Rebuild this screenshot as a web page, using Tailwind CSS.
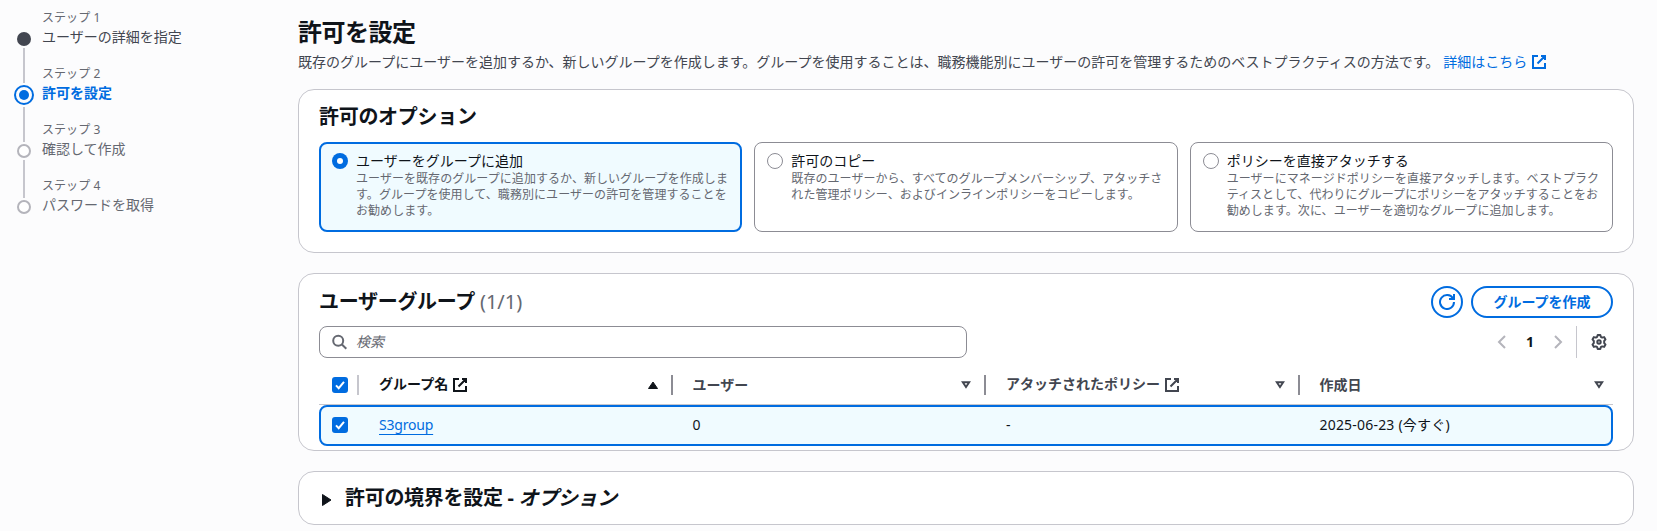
<!DOCTYPE html>
<html lang="ja">
<head>
<meta charset="utf-8">
<title>許可を設定</title>
<script src="https://cdn.jsdelivr.net/npm/@tailwindcss/browser@4"></script>
</head>
<body class="h-[531px] overflow-hidden bg-[#fcfcfd] font-['Noto_Sans','Noto_Sans_CJK_JP',sans-serif] text-sm leading-5 text-[#0f141a]">
<svg class="hidden">
  <symbol id="external" viewBox="0 0 16 16"><path d="M10 2h4v4M6.500 9.500L14 2M14 9.05V14H2V2h5" fill="none" stroke="currentColor" stroke-width="2"/></symbol>
  <symbol id="check" viewBox="0 0 16 16"><rect width="16" height="16" rx="3" fill="#006ce0"/><path d="M4 8.4l2.7 2.8L12 4.8" fill="none" stroke="#fff" stroke-width="2"/></symbol>
  <symbol id="sort" viewBox="0 0 16 16"><path d="M4.800 5.200h6.400L8 10z" fill="none" stroke="currentColor" stroke-width="1.900"/></symbol>
</svg>
<div class="flex h-full">
  <nav class="flex w-[298px] shrink-0 gap-2 pl-[14px] pt-[10px]">
    <svg class="h-[210px] w-5 shrink-0" viewBox="0 0 20 210" fill="none">
      <path d="M10 38v35M10 97v35M10 150v38" stroke="#c6c6cd" stroke-width="2"/>
      <circle cx="10" cy="29" r="7" fill="#424650"/>
      <circle cx="10" cy="85" r="9" stroke="#006ce0" stroke-width="2"/>
      <circle cx="10" cy="85" r="5" fill="#006ce0"/>
      <circle cx="10" cy="141" r="6" fill="#fff" stroke="#b4b4bb" stroke-width="2"/>
      <circle cx="10" cy="197" r="6" fill="#fff" stroke="#b4b4bb" stroke-width="2"/>
    </svg>
    <ol class="text-[#656871]">
      <li class="h-14"><div class="text-xs leading-4 tracking-[0.005em]">ステップ 1</div><div class="pt-px text-[#424650]">ユーザーの詳細を指定</div></li>
      <li class="h-14"><div class="text-xs leading-4 tracking-[0.005em]">ステップ 2</div><div class="pt-px font-bold text-[#006ce0]">許可を設定</div></li>
      <li class="h-14"><div class="text-xs leading-4 tracking-[0.005em]">ステップ 3</div><div class="pt-px">確認して作成</div></li>
      <li class="h-14"><div class="text-xs leading-4 tracking-[0.005em]">ステップ 4</div><div class="pt-px">パスワードを取得</div></li>
    </ol>
  </nav>
  <main class="flex w-[1336px] shrink-0 flex-col gap-5 pt-[18px]">
    <header class="-mt-px -mb-1 h-14">
      <h1 class="text-2xl leading-[30px] font-bold tracking-[-0.02em]">許可を設定</h1>
      <p class="flex items-center pt-[5px] whitespace-nowrap text-[#424650]">既存のグループにユーザーを追加するか、新しいグループを作成します。グループを使用することは、職務機能別にユーザーの許可を管理するためのベストプラクティスの方法です。<a class="ml-1 flex items-center gap-1 text-[#006ce0]">詳細はこちら<svg class="size-4"><use href="#external"/></svg></a></p>
    </header>

    <section class="h-[164px] shrink-0 rounded-2xl border border-[#c6c6cd] bg-white px-5 pt-[15px]">
      <h2 class="text-xl leading-6 font-bold tracking-[-0.015em]">許可のオプション</h2>
      <div class="mt-[13px] grid h-[90px] grid-cols-3 gap-3">
        <label class="flex gap-2 rounded-lg border-2 border-[#006ce0] bg-[#f0fbff] px-[11px] pt-[7px]">
          <svg class="mt-0.5 size-4 shrink-0" viewBox="0 0 16 16"><circle cx="8" cy="8" r="8" fill="#006ce0"/><circle cx="8" cy="8" r="3" fill="#fff"/></svg>
          <div class="min-w-0"><div>ユーザーをグループに追加</div><p class="-mr-1 text-xs leading-4 tracking-[0.005em] whitespace-nowrap text-[#656871]">ユーザーを既存のグループに追加するか、新しいグループを作成しま<br>す。グループを使用して、職務別にユーザーの許可を管理することを<br>お勧めします。</p></div>
        </label>
        <label class="flex gap-2 rounded-lg border border-[#8c8c94] px-3 pt-2">
          <svg class="mt-0.5 size-4 shrink-0" viewBox="0 0 16 16"><circle cx="8" cy="8" r="7.5" fill="#fff" stroke="#8c8c94"/></svg>
          <div class="min-w-0"><div>許可のコピー</div><p class="-mr-1 text-xs leading-4 tracking-[0.005em] whitespace-nowrap text-[#656871]">既存のユーザーから、すべてのグループメンバーシップ、アタッチさ<br>れた管理ポリシー、およびインラインポリシーをコピーします。</p></div>
        </label>
        <label class="flex gap-2 rounded-lg border border-[#8c8c94] px-3 pt-2">
          <svg class="mt-0.5 size-4 shrink-0" viewBox="0 0 16 16"><circle cx="8" cy="8" r="7.5" fill="#fff" stroke="#8c8c94"/></svg>
          <div class="min-w-0"><div>ポリシーを直接アタッチする</div><p class="-mr-1 text-xs leading-4 tracking-[0.005em] whitespace-nowrap text-[#656871]">ユーザーにマネージドポリシーを直接アタッチします。ベストプラク<br>ティスとして、代わりにグループにポリシーをアタッチすることをお<br>勧めします。次に、ユーザーを適切なグループに追加します。</p></div>
        </label>
      </div>
    </section>

    <section class="h-[178px] shrink-0 rounded-2xl border border-[#c6c6cd] bg-white px-5 pt-3">
      <div class="flex h-8 items-center gap-2">
        <h2 class="mr-auto pb-px text-xl leading-6 font-bold tracking-[-0.015em]">ユーザーグループ <span class="font-normal tracking-normal text-[#656871]">(1/1)</span></h2>
        <button class="flex size-8 items-center justify-center rounded-full border-2 border-[#006ce0] text-[#006ce0]"><svg class="size-4 shrink-0" viewBox="0 0 16 16" fill="none" stroke="currentColor" stroke-width="2"><path d="M10 5h5V0M15 8a7 7 0 1 1-1-3.6"/></svg></button>
        <button class="h-8 w-[142px] rounded-full border-2 border-[#006ce0] pb-px leading-[27px] font-bold text-[#006ce0]">グループを作成</button>
      </div>
      <div class="mt-2 flex h-8 items-center">
        <div class="mr-auto flex h-8 w-[648px] items-center gap-2 rounded-lg border border-[#8c8c94] px-3 text-[#656871]">
          <svg class="size-4" viewBox="0 0 16 16" fill="none" stroke="currentColor" stroke-width="2"><circle cx="6.200" cy="6.700" r="5"/><path d="M9.700 10.300l4.600 4.400"/></svg>
          <span class="pb-px italic">検索</span>
        </div>
        <div class="flex items-center text-[#b4b4bb]">
          <svg class="size-4" viewBox="0 0 16 16" fill="none" stroke="currentColor" stroke-width="2"><path d="M11 2L5 8l6 6"/></svg>
          <span class="w-10 text-center font-bold text-[#0f141a]">1</span>
          <svg class="size-4" viewBox="0 0 16 16" fill="none" stroke="currentColor" stroke-width="2"><path d="M5 2l6 6-6 6"/></svg>
        </div>
        <div class="ml-[10px] h-8 w-px bg-[#c6c6cd]"></div>
        <svg class="mr-[6px] ml-[14px] size-4 text-[#424650]" viewBox="0 0 16 16" fill="none" stroke="currentColor" stroke-width="2" stroke-linejoin="round"><path d="M6.7 1h2.6l.5 1.8 1.4.8 1.9-.5 1.400 2.300L13.200 6.900v2.200l1.300 1.500-1.400 2.300-1.900-.5-1.400.8-.5 1.800H6.700l-.5-1.800-1.400-.8-1.900.5-1.400-2.300L2.800 9.100V6.900L1.500 5.400l1.400-2.300 1.900.5 1.400-.8z"/><circle cx="8" cy="8" r="1.7"/></svg>
      </div>
      <div class="mt-[7px] grid h-10 grid-cols-[40px_repeat(4,1fr)] border-b border-[#c6c6cd] font-bold text-[#424650]">
        <div class="flex items-center justify-between pl-[13px]"><svg class="size-4"><use href="#check"/></svg><i class="h-5 w-0.5 bg-[#c6c6cd]"></i></div>
        <div class="flex items-center pl-5 text-[#0f141a]"><span class="pb-px">グループ名</span><svg class="ml-1 size-4"><use href="#external"/></svg><svg class="mr-[10px] ml-auto size-4" viewBox="0 0 16 16"><path d="M3.500 11.500L8 5l4.500 6.500z" fill="currentColor" stroke="currentColor" stroke-linejoin="round"/></svg><i class="h-5 w-0.5 bg-[#8c8c94]"></i></div>
        <div class="flex items-center pl-5">ユーザー<svg class="mr-[10px] ml-auto size-4"><use href="#sort"/></svg><i class="h-5 w-0.5 bg-[#8c8c94]"></i></div>
        <div class="flex items-center pl-5"><span class="pb-px">アタッチされたポリシー</span><svg class="ml-1 size-4"><use href="#external"/></svg><svg class="mr-[10px] ml-auto size-4"><use href="#sort"/></svg><i class="h-5 w-0.5 bg-[#8c8c94]"></i></div>
        <div class="flex items-center pl-5">作成日<svg class="mr-[6px] ml-auto size-4"><use href="#sort"/></svg></div>
      </div>
      <div class="grid h-[41px] grid-cols-[38px_313.5px_313.5px_313.5px_1fr] items-center rounded-lg border-2 border-[#006ce0] bg-[#f0fbff] pb-px">
        <svg class="ml-[11px] size-4"><use href="#check"/></svg>
        <div class="pl-5"><a class="tracking-[-0.2px] text-[#006ce0] underline decoration-1 underline-offset-4">S3group</a></div>
        <div class="pl-5">0</div>
        <div class="pl-5">-</div>
        <div class="pl-5 tracking-[0.2px]">2025-06-23 (今すぐ)</div>
      </div>
    </section>

    <section class="flex h-[54px] shrink-0 items-center gap-[10px] rounded-2xl border border-[#c6c6cd] bg-white px-5">
      <svg class="mt-[3px] size-4" viewBox="0 0 16 16"><path d="M3.500 2.500v11l8.500-5.500z" fill="currentColor" stroke="currentColor" stroke-linejoin="round"/></svg>
      <h2 class="text-xl leading-6 font-bold tracking-[-0.015em]">許可の境界を設定 - <em>オプション</em></h2>
    </section>
  </main>
</div>
</body>
</html>
